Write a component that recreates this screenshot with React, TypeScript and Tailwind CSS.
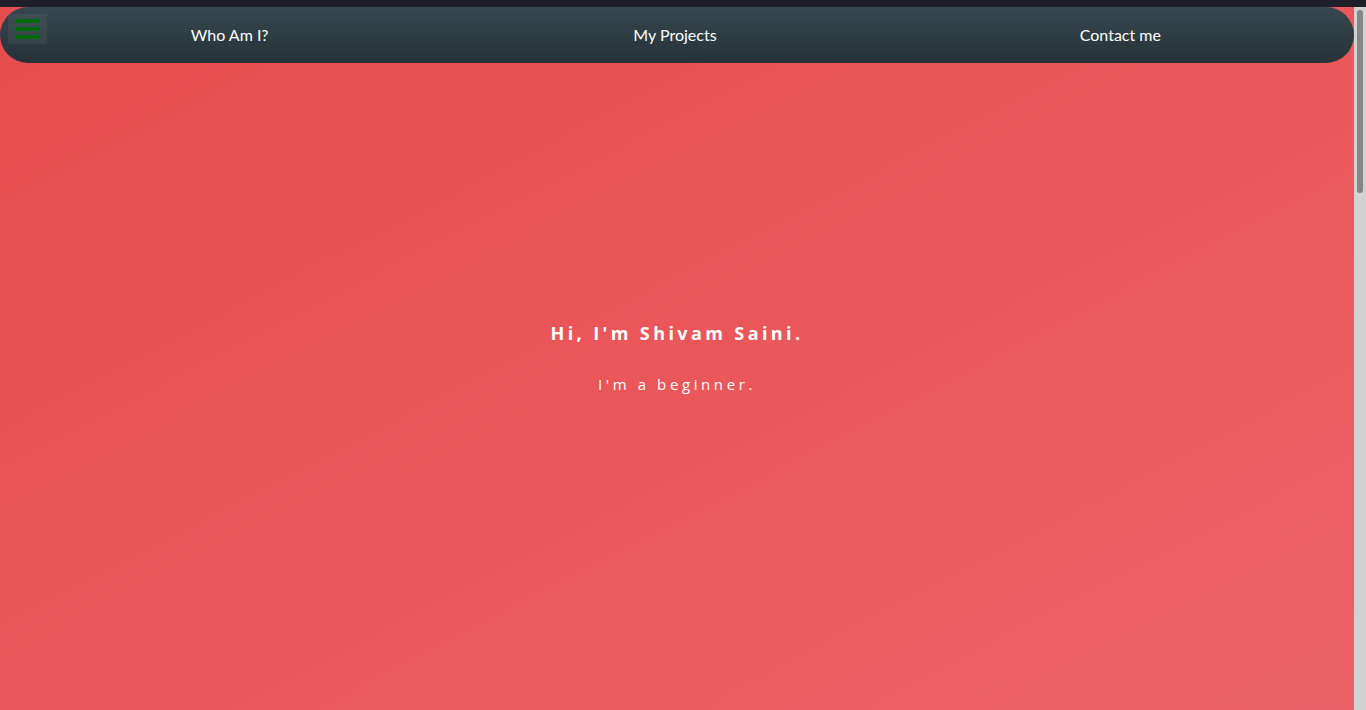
function Navbar() {
  const links = ["Who Am I?", "My Projects", "Contact me"];
  return (
    <nav className="absolute top-0 left-0 right-0 z-10 h-14 rounded-full bg-gradient-to-b from-[#37474f] to-[#263238] font-['Lato',sans-serif] text-base text-white">
      <button className="absolute left-2 top-[7px] flex h-[30px] w-[39px] flex-col items-center justify-center gap-1 bg-white/5">
        <span className="block h-1 w-[25px] rounded-full bg-[#006a00]" />
        <span className="block h-1 w-[25px] rounded-full bg-[#006a00]" />
        <span className="block h-1 w-[25px] rounded-full bg-[#006a00]" />
      </button>
      <ul className="grid h-full grid-cols-3 items-center pl-[7px] pr-[11px]">
        {links.map((l) => (
          <li key={l} className="text-center">
            {l}
          </li>
        ))}
      </ul>
    </nav>
  );
}

function Hero() {
  return (
    <section className="flex h-[702px] flex-col items-center justify-center gap-[26px] text-white">
      <h1 className="font-['Open_Sans',sans-serif] text-[18px] font-bold tracking-[3.4px]">
        Hi, I'm Shivam Saini.
      </h1>
      <p className="font-['Open_Sans',sans-serif] text-[15px] font-normal tracking-[3.6px]">
        I'm a beginner.
      </p>
    </section>
  );
}

function Scrollbar() {
  return (
    <div className="h-full w-3 shrink-0 bg-[#d2d2d2] px-[3px] pt-[3px]">
      <div className="h-[183px] w-full rounded-full bg-[#868686]" />
    </div>
  );
}

export default function App() {
  return (
    <div className="flex h-screen flex-col overflow-hidden bg-[#1f1f2a] pt-[7px]">
      <div className="flex min-h-0 flex-1">
        <main className="relative min-w-0 flex-1 overflow-hidden bg-gradient-to-br from-[#e84c4c] to-[#ec6167]">
          <Navbar />
          <Hero />
        </main>
        <Scrollbar />
      </div>
    </div>
  );
}
